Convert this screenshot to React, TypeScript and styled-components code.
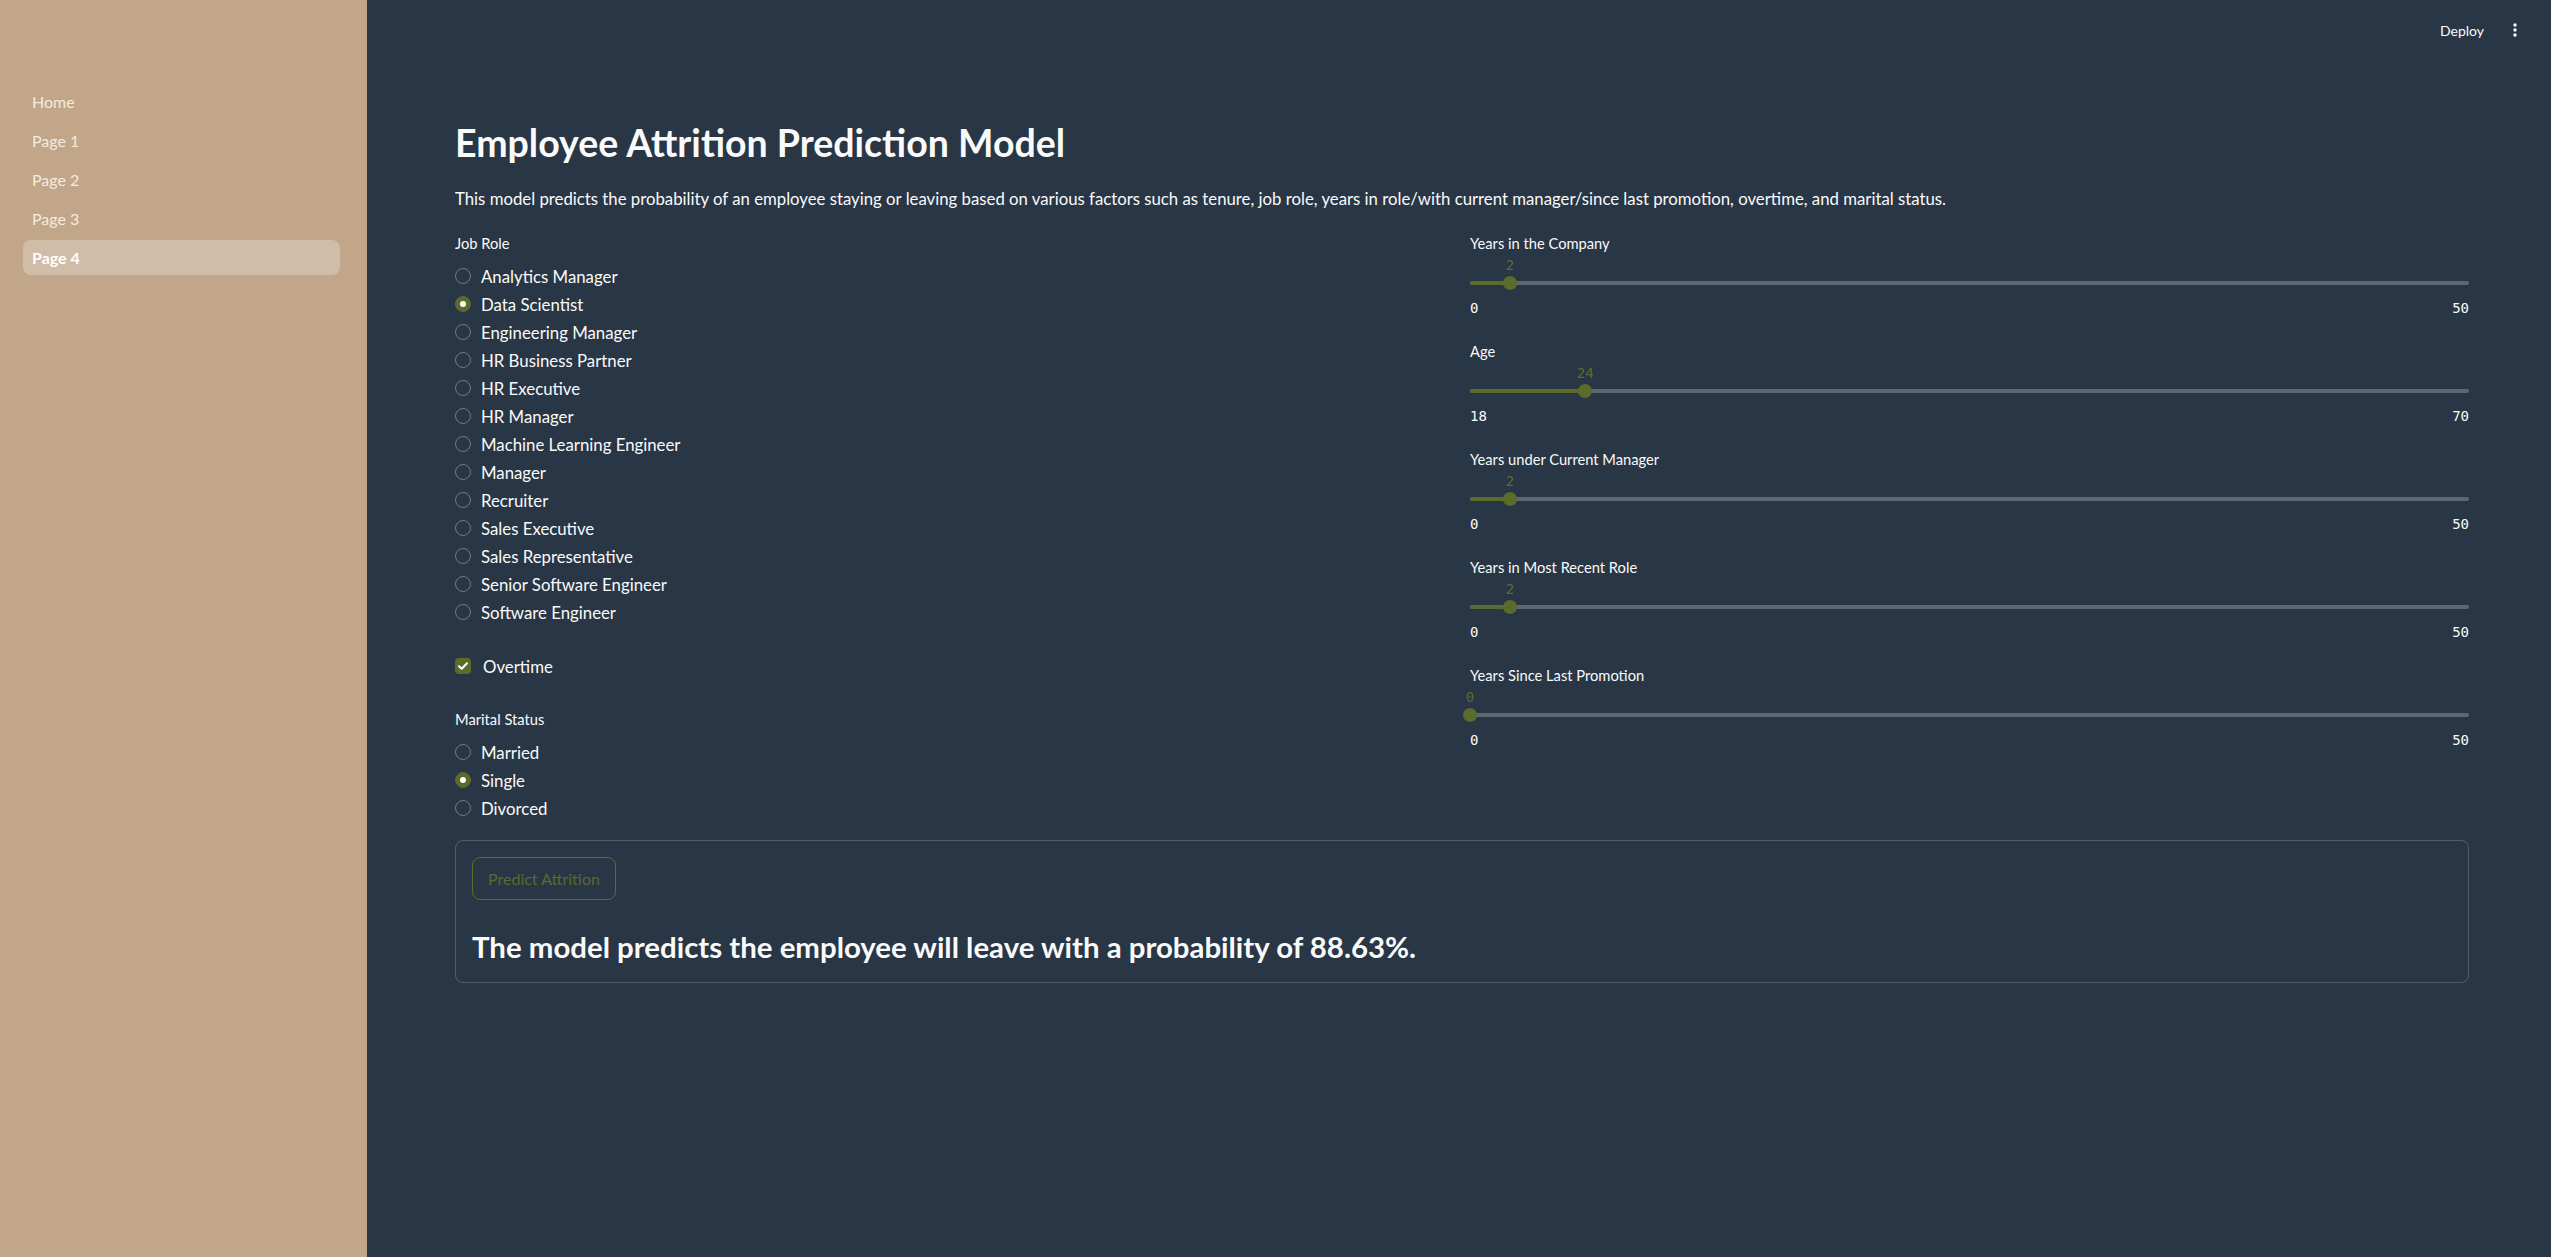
import React from "react";
import styled, { createGlobalStyle } from "styled-components";

const GREEN = "#5a6b2c";
const BG = "#293645";
const TEXT = "#fafafa";
const FONT = `"Lato", "Liberation Sans", sans-serif`;
const MONO = `"DejaVu Sans Mono", "Liberation Mono", monospace`;

const Global = createGlobalStyle`
  html, body { margin: 0; padding: 0; background: ${BG}; }
  body { font-family: ${FONT}; color: ${TEXT}; overflow: hidden; }
  * { box-sizing: border-box; }
`;

const Shell = styled.div`
  display: flex;
  width: 100%;
  height: 1257px;
`;

const Sidebar = styled.aside`
  width: 367px;
  flex: none;
  background: #c2a68a;
  padding: 84px 27px 0 23px;
  display: flex;
  flex-direction: column;
  gap: 4px;
`;

const NavItem = styled.a<{ $active?: boolean }>`
  display: flex;
  align-items: center;
  height: 35px;
  padding-left: 9px;
  border-radius: 8px;
  font-size: 16px;
  text-decoration: none;
  color: ${(p) => (p.$active ? "#ffffff" : "#f4ebdf")};
  font-weight: ${(p) => (p.$active ? 700 : 400)};
  background: ${(p) => (p.$active ? "rgba(255,255,255,0.25)" : "transparent")};
`;

const Main = styled.main`
  flex: 1;
  min-width: 0;
  display: flex;
  flex-direction: column;
`;

const Header = styled.header`
  height: 60px;
  display: flex;
  justify-content: flex-end;
  align-items: center;
  padding-right: 24px;
  gap: 19px;
`;

const DeployButton = styled.button`
  background: none;
  border: none;
  padding: 0;
  color: ${TEXT};
  font-family: ${FONT};
  font-size: 14px;
`;

const MenuButton = styled.button`
  width: 24px;
  height: 24px;
  background: none;
  border: none;
  padding: 0;
  display: flex;
  align-items: center;
  justify-content: center;
  color: ${TEXT};
`;

const Content = styled.div`
  padding: 0 82px 0 88px;
  display: flex;
  flex-direction: column;
`;

const Title = styled.h1`
  margin: 59px 0 0;
  font-size: 37.5px;
  line-height: 48px;
  font-weight: 700;
`;

const Description = styled.p`
  margin: 20px 0 0;
  font-size: 16.75px;
  line-height: 24px;
`;

const Columns = styled.div`
  margin-top: 20px;
  display: grid;
  grid-template-columns: 1fr 1fr;
  gap: 16px;
`;

const Column = styled.div`
  display: flex;
  flex-direction: column;
`;

const FieldLabel = styled.div<{ $gap?: number }>`
  height: 24px;
  line-height: 24px;
  font-size: 14.7px;
  margin-top: ${(p) => p.$gap ?? 0}px;
`;

const OptionList = styled.div`
  margin-top: 7px;
  display: flex;
  flex-direction: column;
`;

const OptionRow = styled.label`
  height: 28px;
  display: flex;
  align-items: center;
  gap: 10px;
  font-size: 16.8px;
`;

const RadioDot = styled.span<{ $checked?: boolean }>`
  width: 16px;
  height: 16px;
  border-radius: 50%;
  flex: none;
  display: flex;
  align-items: center;
  justify-content: center;
  border: 1px solid ${(p) => (p.$checked ? GREEN : "rgba(250,250,250,0.35)")};
  background: ${(p) => (p.$checked ? GREEN : "transparent")};
  &::after {
    content: "";
    display: ${(p) => (p.$checked ? "block" : "none")};
    width: 6px;
    height: 6px;
    border-radius: 50%;
    background: #ffffff;
  }
`;

const CheckRow = styled.label`
  margin-top: 26px;
  height: 28px;
  display: flex;
  align-items: center;
  gap: 12px;
  font-size: 16.8px;
`;

const CheckBox = styled.span`
  width: 16px;
  height: 16px;
  border-radius: 4px;
  background: ${GREEN};
  display: flex;
  align-items: center;
  justify-content: center;
  flex: none;
`;

const SliderBlock = styled.div`
  display: flex;
  flex-direction: column;
  margin-bottom: 14px;
`;

const ValueRow = styled.div`
  position: relative;
  height: 20px;
`;

const ThumbValue = styled.span`
  position: absolute;
  top: 0;
  transform: translateX(-50%);
  font-family: ${MONO};
  font-size: 14px;
  line-height: 20px;
  color: ${GREEN};
`;

const TrackRow = styled.div`
  position: relative;
  height: 16px;
  display: flex;
  align-items: center;
`;

const Track = styled.div`
  width: 100%;
  height: 4px;
  border-radius: 2px;
  background: #5d6772;
  overflow: hidden;
`;

const TrackFill = styled.div`
  height: 100%;
  background: ${GREEN};
`;

const Thumb = styled.span`
  position: absolute;
  top: 1px;
  width: 14px;
  height: 14px;
  border-radius: 50%;
  background: ${GREEN};
  transform: translateX(-50%);
`;

const MinMax = styled.div`
  height: 34px;
  display: flex;
  justify-content: space-between;
  align-items: center;
  font-family: ${MONO};
  font-size: 14px;
`;

const ResultBox = styled.section`
  margin-top: 18px;
  border: 1px solid rgba(250, 250, 250, 0.2);
  border-radius: 8px;
  padding: 16px 16px 15px;
  display: flex;
  flex-direction: column;
  align-items: flex-start;
`;

const PredictButton = styled.button`
  height: 43px;
  width: 144px;
  border: 1px solid ${GREEN};
  border-radius: 8px;
  background: transparent;
  color: ${GREEN};
  font-family: ${FONT};
  font-size: 16px;
`;

const ResultText = styled.h3`
  margin: 27px 0 0;
  font-size: 29.4px;
  line-height: 40px;
  font-weight: 700;
`;

const jobRoles = [
  "Analytics Manager",
  "Data Scientist",
  "Engineering Manager",
  "HR Business Partner",
  "HR Executive",
  "HR Manager",
  "Machine Learning Engineer",
  "Manager",
  "Recruiter",
  "Sales Executive",
  "Sales Representative",
  "Senior Software Engineer",
  "Software Engineer",
];

const marital = ["Married", "Single", "Divorced"];

const sliders = [
  { label: "Years in the Company", min: 0, max: 50, value: 2 },
  { label: "Age", min: 18, max: 70, value: 24 },
  { label: "Years under Current Manager", min: 0, max: 50, value: 2 },
  { label: "Years in Most Recent Role", min: 0, max: 50, value: 2 },
  { label: "Years Since Last Promotion", min: 0, max: 50, value: 0 },
];

function Slider({ label, min, max, value }: { label: string; min: number; max: number; value: number }) {
  const pct = ((value - min) / (max - min)) * 100;
  return (
    <SliderBlock>
      <FieldLabel>{label}</FieldLabel>
      <ValueRow>
        <ThumbValue style={{ left: `${pct}%` }}>{value}</ThumbValue>
      </ValueRow>
      <TrackRow>
        <Track>
          <TrackFill style={{ width: `${pct}%` }} />
        </Track>
        <Thumb style={{ left: `${pct}%` }} />
      </TrackRow>
      <MinMax>
        <span>{min}</span>
        <span>{max}</span>
      </MinMax>
    </SliderBlock>
  );
}

export default function App() {
  return (
    <>
      <Global />
      <Shell>
        <Sidebar>
          <NavItem>Home</NavItem>
          <NavItem>Page 1</NavItem>
          <NavItem>Page 2</NavItem>
          <NavItem>Page 3</NavItem>
          <NavItem $active>Page 4</NavItem>
        </Sidebar>
        <Main>
          <Header>
            <DeployButton>Deploy</DeployButton>
            <MenuButton aria-label="menu">
              <svg width="4" height="14" viewBox="0 0 4 14">
                <circle cx="2" cy="2" r="1.7" fill="#fafafa" />
                <circle cx="2" cy="7" r="1.7" fill="#fafafa" />
                <circle cx="2" cy="12" r="1.7" fill="#fafafa" />
              </svg>
            </MenuButton>
          </Header>
          <Content>
            <Title>Employee Attrition Prediction Model</Title>
            <Description>
              This model predicts the probability of an employee staying or leaving based on various factors such as
              tenure, job role, years in role/with current manager/since last promotion, overtime, and marital status.
            </Description>
            <Columns>
              <Column>
                <FieldLabel>Job Role</FieldLabel>
                <OptionList>
                  {jobRoles.map((r) => (
                    <OptionRow key={r}>
                      <RadioDot $checked={r === "Data Scientist"} />
                      {r}
                    </OptionRow>
                  ))}
                </OptionList>
                <CheckRow>
                  <CheckBox>
                    <svg width="10" height="8" viewBox="0 0 10 8">
                      <path d="M1 4.2 L3.7 6.8 L9 1.2" stroke="#fff" strokeWidth="2" fill="none" strokeLinecap="round" strokeLinejoin="round" />
                    </svg>
                  </CheckBox>
                  Overtime
                </CheckRow>
                <FieldLabel $gap={27}>Marital Status</FieldLabel>
                <OptionList>
                  {marital.map((m) => (
                    <OptionRow key={m}>
                      <RadioDot $checked={m === "Single"} />
                      {m}
                    </OptionRow>
                  ))}
                </OptionList>
              </Column>
              <Column>
                {sliders.map((s) => (
                  <Slider key={s.label} {...s} />
                ))}
              </Column>
            </Columns>
            <ResultBox>
              <PredictButton>Predict Attrition</PredictButton>
              <ResultText>The model predicts the employee will leave with a probability of 88.63%.</ResultText>
            </ResultBox>
          </Content>
        </Main>
      </Shell>
    </>
  );
}
